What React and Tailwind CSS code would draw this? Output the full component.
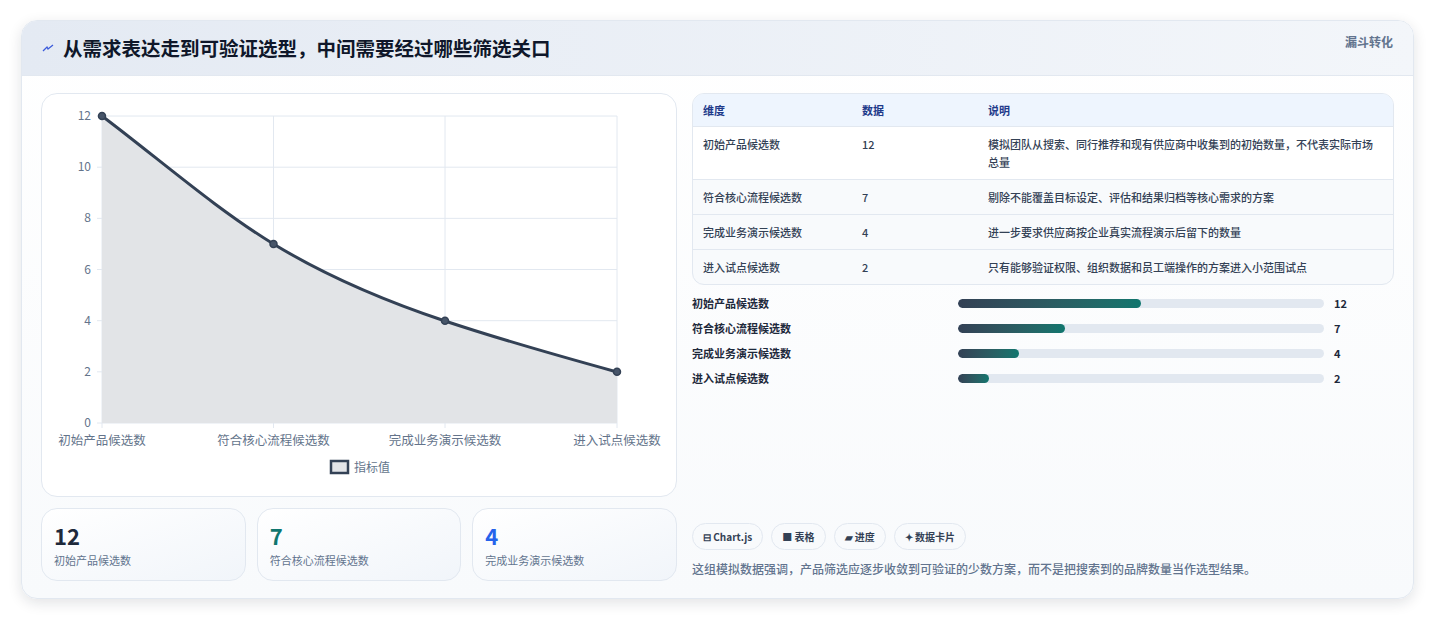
import React from "react";

const rows = [
  { name: "初始产品候选数", value: 12, note: "模拟团队从搜索、同行推荐和现有供应商中收集到的初始数量，不代表实际市场总量" },
  { name: "符合核心流程候选数", value: 7, note: "剔除不能覆盖目标设定、评估和结果归档等核心需求的方案" },
  { name: "完成业务演示候选数", value: 4, note: "进一步要求供应商按企业真实流程演示后留下的数量" },
  { name: "进入试点候选数", value: 2, note: "只有能够验证权限、组织数据和员工端操作的方案进入小范围试点" },
];

const font = { fontFamily: '"Noto Sans CJK SC", "Noto Sans", sans-serif' };

function FunnelChart() {
  const xs = [60, 231.5, 403, 575];
  const y = (v) => 329 - v * 25.58;
  const pts = rows.map((r, i) => [xs[i], y(r.value)]);
  const line =
    "M60 22 C117 65 174 115 231.5 150 C289 185 346 208 403 227 C460 246 517 262 575 278";
  return (
    <svg width="636" height="400" viewBox="0 0 636 400" className="block">
      {[0, 2, 4, 6, 8, 10, 12].map((v) => (
        <g key={v}>
          <line x1="55" x2="575" y1={y(v)} y2={y(v)} stroke="#e2e8f0" />
          <text x="49" y={y(v) + 4} textAnchor="end" fontSize="12" fill="#64748b" style={font}>{v}</text>
        </g>
      ))}
      {xs.map((x, i) => (
        <line key={i} x1={x} x2={x} y1="22" y2="334" stroke="#e2e8f0" />
      ))}
      <path d={line + " L575 329 L60 329 Z"} fill="#e2e4e7" />
      <path d={line} fill="none" stroke="#334155" strokeWidth="3" />
      {pts.map(([px, py], i) => (
        <circle key={i} cx={px} cy={py} r="3.5" fill="#475569" stroke="#334155" strokeWidth="1.5" />
      ))}
      {rows.map((r, i) => (
        <text key={i} x={xs[i]} y="351" textAnchor="middle" fontSize="12.5" fill="#64748b" style={font}>{r.name}</text>
      ))}
      <rect x="289" y="367" width="17" height="12" fill="#e2e4e7" stroke="#334155" strokeWidth="2.5" />
      <text x="312" y="378" fontSize="12" fill="#64748b" style={font}>指标值</text>
    </svg>
  );
}

export default function App() {
  return (
    <div className="min-h-[621px] bg-white px-[21px] pt-[20px]" style={font}>
      <div className="w-[1393px] h-[579px] rounded-2xl border border-slate-200 bg-gradient-to-b from-white to-[#f8fafc] shadow-[0_4px_14px_rgba(15,23,42,0.12)] overflow-hidden">
        <div className="h-[55px] flex items-center justify-between px-5 bg-gradient-to-r from-[#e4eaf3] to-[#f3f6fa] border-b border-slate-200">
          <div className="flex items-center gap-[9px]">
            <svg width="12" height="10" viewBox="0 0 12 10">
              <path d="M1 8 L5 4 L6 6 L11 2" fill="none" stroke="#3b5bdb" strokeWidth="1.3" />
            </svg>
            <h1 className="text-[19.5px] font-bold text-[#0f172a]">从需求表达走到可验证选型，中间需要经过哪些筛选关口</h1>
          </div>
          <span className="text-[12px] font-semibold text-slate-500 -mt-3">漏斗转化</span>
        </div>
        <div className="flex gap-[15px] px-[19px] pt-[17px]">
          <div className="w-[636px] flex flex-col gap-[11px]">
            <div className="h-[404px] rounded-2xl border border-slate-200 bg-white">
              <FunnelChart />
            </div>
            <div className="flex gap-[11px]">
              {rows.slice(0, 3).map((r, i) => (
                <div key={i} className="w-[205px] h-[73px] rounded-2xl border border-slate-200 bg-gradient-to-br from-white to-[#f1f5fa] px-3 pt-[12px]">
                  <div className={`text-[22px] font-bold leading-7 ${["text-[#1e293b]", "text-[#0f766e]", "text-[#2563eb]"][i]}`}>{r.value}</div>
                  <div className="text-[11px] text-slate-500 mt-[3px]">{r.name}</div>
                </div>
              ))}
            </div>
          </div>
          <div className="w-[704px] flex flex-col">
            <div className="rounded-xl border border-slate-200 overflow-hidden bg-[#f8fafc] text-[11px]">
              <div className="flex h-[33px] items-center bg-[#eef5fe] text-[#1e3a8a] font-semibold border-b border-slate-200">
                <div className="w-[169px] pl-[10px]">维度</div>
                <div className="w-[126px]">数据</div>
                <div className="flex-1">说明</div>
              </div>
              {rows.map((r, i) => (
                <div key={i} className={`flex py-[8px] text-[#334155] font-medium leading-[18px] ${i < 3 ? "border-b border-slate-200" : ""} ${i === 0 ? "bg-white" : ""}`}>
                  <div className="w-[169px] pl-[10px]">{r.name}</div>
                  <div className="w-[126px]">{r.value}</div>
                  <div className="flex-1 pr-3">{r.note}</div>
                </div>
              ))}
            </div>
            <div className="mt-[9px] flex flex-col gap-[7px]">
              {rows.map((r, i) => (
                <div key={i} className="flex items-center h-[18px] text-[11px] font-semibold text-[#1e293b]">
                  <div className="w-[266px]">{r.name}</div>
                  <div className="w-[366px] h-[9px] rounded-full bg-[#e2e8f0] overflow-hidden">
                    <div className="h-full rounded-full bg-gradient-to-r from-[#334155] to-[#0f766e]" style={{ width: `${(r.value / 24) * 100}%` }} />
                  </div>
                  <div className="ml-[10px]">{r.value}</div>
                </div>
              ))}
            </div>
            <div className="mt-[136px] flex gap-[8px]">
              {["⊟ Chart.js", "■ 表格", "▰ 进度", "✦ 数据卡片"].map((t) => (
                <span key={t} className="h-[27px] px-[10px] flex items-center rounded-full border border-slate-200 bg-[#f8fafc] text-[10px] font-semibold text-[#334155]">{t}</span>
              ))}
            </div>
            <p className="mt-[10px] text-[12px] font-medium text-slate-500">这组模拟数据强调，产品筛选应逐步收敛到可验证的少数方案，而不是把搜索到的品牌数量当作选型结果。</p>
          </div>
        </div>
      </div>
    </div>
  );
}
